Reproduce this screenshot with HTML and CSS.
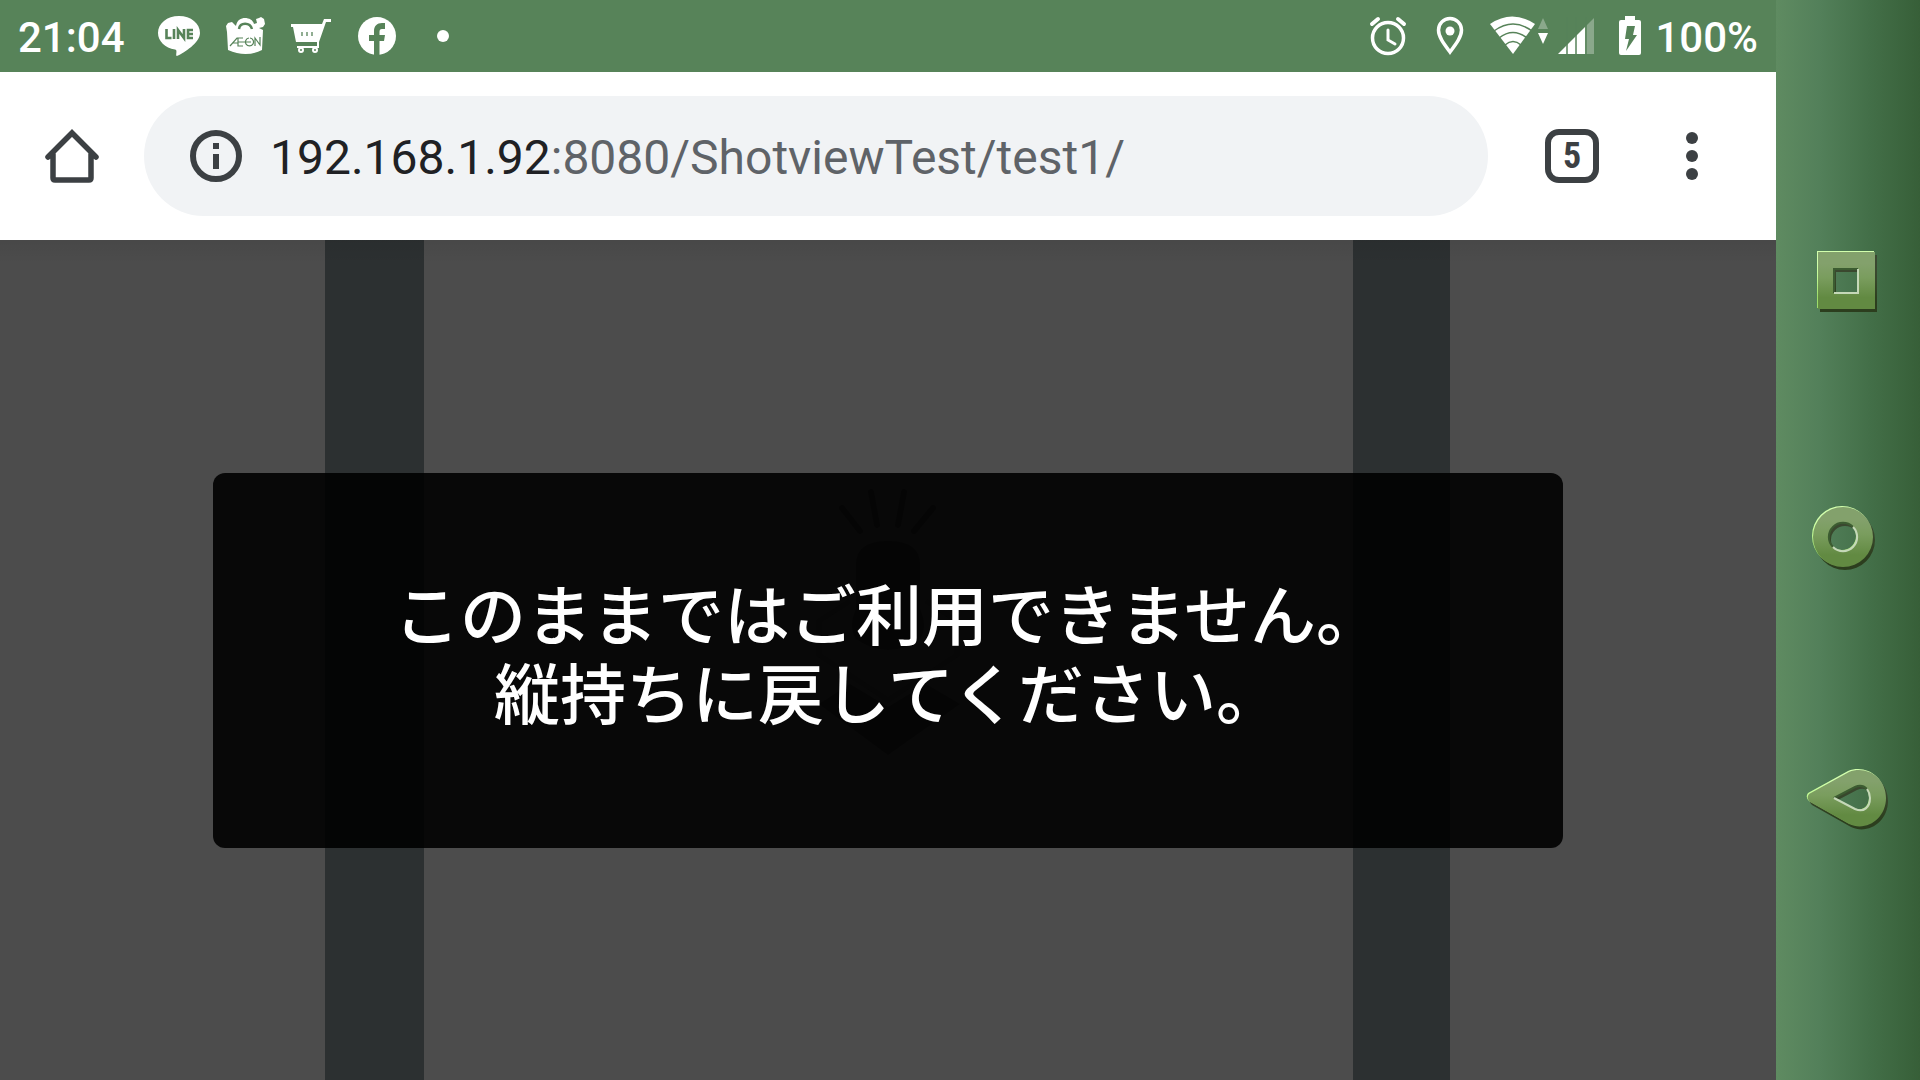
FILE: index.html
```html
<!DOCTYPE html>
<html lang="ja">
<head>
<meta charset="utf-8">
<meta name="viewport" content="width=device-width, initial-scale=1">
<title>ShotviewTest</title>
<link rel="stylesheet" href="styles.css">
</head>
<body>
<div class="device">
  <div class="screen">
    <header class="status-bar">
      <div class="status-group status-left">
        <time class="clock">21:04</time>
        <svg class="status-icon" viewBox="0 0 48 48" aria-label="LINE">
          <path fill="#fff" d="M24 4C12 4 3 11.500 3 21c0 8 7 15 17 16.500 2 .5 1.500 2 1.200 5.500-.1 1 .8 1.200 1.800.6C29 40.500 45 31 45 21 45 11.500 36 4 24 4z"/>
          <path fill="none" stroke="#578359" stroke-width="2.600" d="M11.500 17v9h5M19 17v10M23 27v-9l6 8v-9M38 18h-5v8h5M33 22h5"/>
        </svg>
        <svg class="status-icon" viewBox="0 0 48 48" aria-label="AEON">
          <path fill="#fff" d="M6 20 5 14l2-3 4-1 3 3 1 1c1-6 5-8 9-8s8 2 9 6l3-1-1-4 3-1 2-1 3 2 1 5-2 3-4 1 4 2-1 20q-16 8-34 0z"/>
          <path fill="none" stroke="#578359" stroke-width="2.500" d="M18 17c1-7 11-7 13 0"/>
          <path fill="none" stroke="#578359" stroke-width="1.200" d="M9 34 16 26h6M12 31h5M17 26v8h5M17 30h13M29 26a4 4 0 1 1-1 0M34 34v-8l5 7v-8"/>
        </svg>
        <svg class="status-icon" viewBox="0 0 48 48" aria-label="cart">
          <path fill="#fff" d="M4 12h31l2-5h7v3h-5l-7 20v6H10v-2h20v-4H9L6 15H4z"/>
          <path fill="none" stroke="#578359" stroke-width="1.300" d="M15 20v4M20 20v4M25 20v4"/>
          <g fill="#578359" stroke="#fff" stroke-width="2"><circle cx="14" cy="38" r="2"/><circle cx="28" cy="38" r="2"/></g>
        </svg>
        <svg class="status-icon" viewBox="0 0 48 48" aria-label="Facebook">
          <circle cx="24" cy="24" r="19" fill="#fff"/>
          <path fill="#578359" d="M21 44V29h-5v-6h5v-4c0-5 3-8 8-8h3v6h-3c-2 0-2.500 1-2.500 3v3H32l-1 6h-4.500v15z"/>
        </svg>
        <svg class="status-icon" viewBox="0 0 48 48" aria-hidden="true"><circle cx="24" cy="24" r="6" fill="#fff"/></svg>
      </div>
      <div class="status-group status-right">
        <svg class="status-icon" viewBox="0 0 48 48" aria-label="alarm">
          <g fill="none" stroke="#fff"><circle cx="24" cy="26" r="15.500" stroke-width="3.500"/><path stroke-width="3" stroke-linecap="round" d="M24 18v10l7 4"/><path stroke-width="4" stroke-linecap="round" d="m8 12 6-5M40 12l-6-5"/></g>
        </svg>
        <svg class="status-icon" viewBox="0 0 48 48" aria-label="location">
          <path fill="none" stroke="#fff" stroke-width="3.500" d="M24 40C18 32 12.500 25 12.500 18a11.500 11.500 0 0 1 23 0C35.500 25 30 32 24 40z"/><circle cx="24" cy="19" r="4.500" fill="#fff"/>
        </svg>
        <div class="network">
          <svg class="wifi" viewBox="0 0 60 48" aria-label="Wi-Fi">
            <path fill="#fff" d="M0 12q22-15 45 0L23 42z"/>
            <path fill="none" stroke="#578359" stroke-width="1.500" d="M4 19q19-14 38 0M9 26q14-11 28 0M15 33q8-7 16 0"/>
            <path fill="#8aa88b" d="m53 6 5 11H48z"/><path fill="#fff" d="m53 32 5-11H48z"/>
          </svg>
          <svg class="signal" viewBox="0 0 36 48" aria-label="signal">
            <path fill="#fff" d="M0 42 27 15v27z"/><path fill="#8aa88b" d="m27 15 9-9v36h-9z"/><path fill="none" stroke="#578359" stroke-width="1.500" d="M9 5v38M18 5v38M28 5v38"/>
          </svg>
        </div>
        <div class="battery">
          <svg class="cell" viewBox="0 0 22 48" aria-label="charging">
            <path fill="#fff" d="M6 4h10v4h4q2 0 2 2v31q0 2-2 2H2q-2 0-2-2V10q0-2 2-2h4z"/><path fill="#578359" d="M8 14h8l-2 9h4L7 39l3-12H6z"/>
          </svg>
          <span>100%</span>
        </div>
      </div>
    </header>

    <nav class="toolbar" aria-label="ブラウザ">
      <button class="tool home" type="button" aria-label="ホーム">
        <svg viewBox="0 0 56 56"><path fill="none" stroke="#3c4043" stroke-width="5.500" stroke-linecap="round" d="M4 29 28 5l24 24M9 26v24q0 2 2 2h34q2 0 2-2V26"/></svg>
      </button>
      <div class="omnibox">
        <svg class="info" viewBox="0 0 52 52" aria-hidden="true"><circle cx="26" cy="26" r="23" fill="none" stroke="#3c4043" stroke-width="6"/><path fill="#3c4043" d="M23 13h6v6h-6zM23 24h6v15h-6z"/></svg>
        <div class="url" role="textbox" aria-label="アドレス" contenteditable="true" spellcheck="false"><span class="host">192.168.1.92</span>:8080/ShotviewTest/test1/</div>
      </div>
      <button class="tool" type="button" aria-label="タブ"><span class="tab-count">5</span></button>
      <button class="tool" type="button" aria-label="メニュー">
        <svg viewBox="0 0 56 56"><g fill="#3c4043"><circle cx="28" cy="10" r="6"/><circle cx="28" cy="28" r="6"/><circle cx="28" cy="46" r="6"/></g></svg>
      </button>
    </nav>

    <main class="page">
      <div class="stripes" aria-hidden="true">
        <span class="stripe stripe-left"></span>
        <svg class="lamp" viewBox="2 0 150 270">
          <g fill="none" stroke="#323232" stroke-width="6" stroke-linecap="round"><path d="m30 19 18 23M59 3l6 33M92 3l-6 33M121 19l-19 23"/></g>
          <path fill="#323232" d="M44 75q0-23 32-23t32 23v45q8 18 0 30-32 22-64 0-8-12 0-30z"/>
          <path fill="none" stroke="#3e3e3e" stroke-width="5" d="m38 112-31 20v34l69 45 69-45v-34l-31-20"/>
          <path fill="#323232" d="m7 215 31-20 38 23 38-23 34 20-72 51z"/>
        </svg>
        <span class="stripe stripe-right"></span>
      </div>
      <div class="notice" role="alertdialog" aria-labelledby="notice-text">
        <p id="notice-text">このままではご利用できません。<br>縦持ちに戻してください。</p>
      </div>
    </main>
  </div>

  <nav class="nav-bar" aria-label="ナビゲーション">
    <button class="nav-key" type="button" aria-label="履歴">
      <svg viewBox="0 0 84 72"><use href="#square" class="shade"/><use href="#square" class="light"/><path id="square" fill="url(#leaf)" fill-rule="evenodd" d="M12 6h57v57H12zM28 23v24h24V23z"/><path class="edge-dark" d="M28 47V23h24"/><path class="edge-light" d="M28 47h24V23"/></svg>
    </button>
    <button class="nav-key" type="button" aria-label="ホーム">
      <svg viewBox="0 0 84 72"><use href="#ring" class="shade"/><use href="#ring" class="light"/><path id="ring" fill="url(#leaf)" fill-rule="evenodd" d="M37 3a30 30 0 1 1 0 60 30 30 0 1 1 0-60zM37 19a14 14 0 1 0 0 28 14 14 0 1 0 0-28z"/><path class="edge-dark" d="M27 43a14 14 0 0 1 20-20"/><path class="edge-light" d="M47 23a14 14 0 0 1-20 20"/></svg>
    </button>
    <button class="nav-key" type="button" aria-label="戻る">
      <svg viewBox="0 0 84 72"><use href="#drop" class="shade"/><use href="#drop" class="light"/><path id="drop" fill="url(#leaf)" fill-rule="evenodd" d="M3 32 43 10c17-7 37 5 37 26S60 70 43 62L4 40q-4-4-1-8zM28 36l21 11c9 4 15-2 15-11s-6-15-15-11z"/><path class="edge-dark" d="m28 36 21-11q7-3 12 2"/><path class="edge-light" d="m28 36 21 11c9 4 15-2 15-11q0-5-3-9"/></svg>
    </button>
    <svg class="defs" aria-hidden="true"><defs><linearGradient id="leaf" x1="0" y1="0" x2="0" y2="1"><stop offset="0.2" stop-color="#83a16c"/><stop offset="0.45" stop-color="#7a9d5e"/><stop offset="0.8" stop-color="#628a42"/></linearGradient></defs></svg>
  </nav>
</div>
</body>
</html>
```
FILE: styles.css
```css
* { box-sizing: border-box; }

body {
  margin: 0;
  font-family: Roboto, "Noto Sans CJK JP", sans-serif;
}

button {
  padding: 0;
  border: 0;
  background: none;
  font: inherit;
  cursor: pointer;
}

svg { display: block; overflow: visible; }

.device { display: flex; min-height: 100vh; }

.screen { flex: 1; display: flex; flex-direction: column; min-width: 0; }

.status-bar {
  display: flex;
  justify-content: space-between;
  align-items: center;
  height: 72px;
  padding: 0 18px;
  background: #578359;
  color: #fff;
  font-size: 42px;
  font-weight: 500;
  line-height: 48px;
}

.status-group { display: flex; align-items: center; }
.status-left { gap: 18px; }
.status-right { gap: 14px; }
.clock { width: 119px; padding-top: 3px; }
.status-icon { width: 48px; height: 48px; }
.network { display: flex; gap: 8px; margin-left: 2px; }
.wifi { width: 60px; height: 48px; }
.signal { width: 36px; height: 48px; }
.battery { display: flex; align-items: center; gap: 14px; margin-left: 11px; }
.battery span { padding-top: 3px; }
.cell { width: 22px; height: 48px; }

.toolbar {
  display: flex;
  align-items: center;
  height: 168px;
  padding-right: 24px;
  background: #fff;
}

.tool { display: grid; place-items: center; width: 120px; height: 120px; }
.tool svg { width: 56px; height: 56px; }
.home { width: 144px; }

.omnibox {
  flex: 1;
  display: flex;
  align-items: center;
  gap: 28px;
  height: 120px;
  margin-right: 24px;
  padding: 0 46px;
  border-radius: 60px;
  background: #f1f3f5;
}

.info { width: 52px; height: 52px; }
.url { flex: 1; padding-top: 2px; color: #5f6368; font-size: 48px; white-space: nowrap; outline: 0; }
.host { color: #202124; }

.tab-count {
  display: grid;
  place-items: center;
  width: 54px;
  height: 54px;
  border: 6px solid #3c4043;
  border-radius: 14px;
  color: #3c4043;
  font-family: "Roboto Condensed", Roboto, sans-serif;
  font-size: 36px;
  font-weight: 700;
}

.page {
  flex: 1;
  display: grid;
  place-items: center;
  background: linear-gradient(rgba(0, 0, 0, 0.06), transparent 24px) #4c4c4c;
}

.stripes,
.notice { grid-area: 1 / 1; }

.stripes {
  display: grid;
  grid-template-columns: 325fr 99fr 929fr 97fr 326fr;
  place-self: stretch;
}

.stripe { background: linear-gradient(rgba(0, 0, 0, 0.06), transparent 24px) #2c3031; }
.stripe-left { grid-column: 2; }
.stripe-right { grid-column: 4; }
.lamp { place-self: center; box-sizing: content-box; width: 150px; height: 270px; padding-bottom: 72px; }

.notice {
  z-index: 1;
  display: grid;
  place-items: center;
  width: 76%;
  min-height: 375px;
  padding-bottom: 18px;
  border-radius: 12px;
  background: rgba(0, 0, 0, 0.89);
  color: #fff;
  font-family: "Noto Sans CJK JP", sans-serif;
  font-size: 66px;
  font-weight: 500;
  line-height: 79px;
  text-align: center;
}

.notice p { margin: 0; }

.nav-bar {
  display: flex;
  flex-direction: column;
  align-items: center;
  justify-content: center;
  gap: 186px;
  width: 144px;
  background: linear-gradient(90deg, #5f8b61, #53805a 30%, #436f48 65%, #375f38);
}

.nav-key svg { width: 84px; height: 72px; }
.defs { position: absolute; width: 0; height: 0; }
.shade { filter: brightness(0.45); transform: translate(2px, 3px); }
.light { filter: brightness(1.6); transform: translate(-1px, -1px); }
.edge-dark { fill: none; stroke: #3c5c31; stroke-width: 2; }
.edge-light { fill: none; stroke: #c5d8b8; stroke-width: 2; }
```
